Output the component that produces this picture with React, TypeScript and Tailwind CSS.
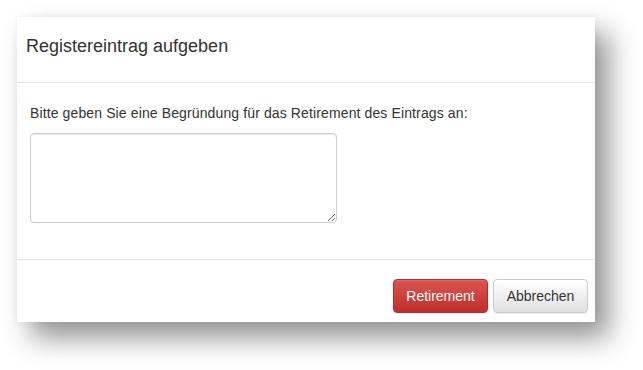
export default function App() {
  return (
    <div className="w-[643px] h-[370px] bg-white pt-[17px] pl-[17px] font-['Liberation_Sans',Arial,sans-serif] text-[#333]">
      <div className="w-[578px] h-[305px] bg-white flex flex-col shadow-[14px_16px_26px_rgba(0,0,0,0.42),0_0_8px_rgba(0,0,0,0.05)]">
        {/* Header */}
        <div className="h-[66px] border-b border-[#e5e5e5] pl-[9px] pt-[16px] shrink-0">
          <h4 className="text-[18px] leading-[26px]">Registereintrag aufgeben</h4>
        </div>

        {/* Body */}
        <div className="flex-1 pl-[13px] pt-[20px]">
          <p className="text-[14px] leading-[20px] tracking-[0.12px]">
            Bitte geben Sie eine Begründung für das Retirement des Eintrags an:
          </p>
          <textarea className="mt-[10px] w-[307px] h-[90px] block border border-[#ccc] rounded-[4px] bg-white shadow-[inset_0_1px_1px_rgba(0,0,0,0.075)] outline-none px-3 py-1.5 text-[14px]" />
        </div>

        {/* Footer */}
        <div className="h-[63px] border-t border-[#e5e5e5] shrink-0 flex justify-end items-start gap-[5px] pt-[19px] pr-[7px]">
          <button className="w-[95px] h-[34px] rounded-[4px] border border-[#b92c28] bg-linear-to-b from-[#d9534f] to-[#c12e2a] text-white text-[14px] shadow-[inset_0_1px_0_rgba(255,255,255,0.15),0_1px_1px_rgba(0,0,0,0.075)]">
            Retirement
          </button>
          <button className="w-[95px] h-[34px] rounded-[4px] border border-[#ccc] bg-linear-to-b from-white to-[#e0e0e0] text-[#333] text-[14px] shadow-[inset_0_1px_0_rgba(255,255,255,0.15),0_1px_1px_rgba(0,0,0,0.075)]">
            Abbrechen
          </button>
        </div>
      </div>
    </div>
  );
}
